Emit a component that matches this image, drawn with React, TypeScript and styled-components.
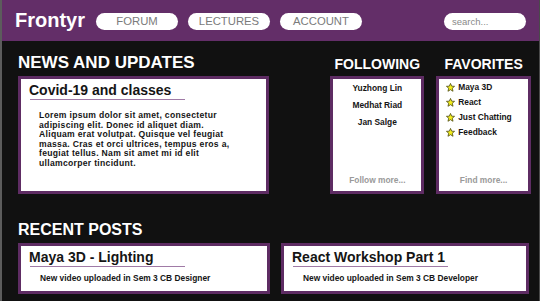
import React from "react";
import styled, { createGlobalStyle } from "styled-components";

const Global = createGlobalStyle`
  html, body { margin: 0; padding: 0; background: #111; }
  * { box-sizing: border-box; }
`;

const Page = styled.div`
  width: 540px;
  height: 301px;
  background: #111111;
  border-left: 2px solid #5c5c5c;
  border-right: 1px solid #4a4a4a;
  font-family: "Liberation Sans", Arial, sans-serif;
  overflow: hidden;
`;

const Header = styled.header`
  height: 41px;
  background: #632e68;
  display: flex;
  align-items: center;
  padding: 0 13px 0 13px;
`;

const Logo = styled.div`
  color: #fff;
  font-size: 20px;
  font-weight: 700;
  margin-right: 11px;
  margin-top: -1px;
`;

const Nav = styled.nav`
  display: flex;
  gap: 10px;
`;

const Pill = styled.div`
  width: 82px;
  height: 17px;
  border-radius: 9px;
  background: #fff;
  color: #7b7b7b;
  font-size: 11.3px;
  display: flex;
  align-items: center;
  justify-content: center;
  margin-top: 1px;
`;

const Search = styled(Pill)`
  margin-left: auto;
  justify-content: flex-start;
  padding-left: 8px;
  font-size: 9.5px;
  color: #8a8a8a;
`;

const Main = styled.main`
  padding: 0 8px 0 16px;
`;

const TopRow = styled.div`
  display: flex;
`;

const Column = styled.section<{ $w: number; $ml?: number }>`
  width: ${(p) => p.$w}px;
  margin-left: ${(p) => p.$ml ?? 0}px;
  display: flex;
  flex-direction: column;
`;

const HeadArea = styled.div<{ $center?: boolean; $h?: number }>`
  height: ${(p) => (p.$h ? `${p.$h}px` : "auto")};
  display: flex;
  align-items: flex-end;
  justify-content: ${(p) => (p.$center ? "center" : "flex-start")};
  padding-bottom: 5px;
`;

const Heading = styled.h2<{ $size: number }>`
  margin: 0;
  color: #fff;
  font-size: ${(p) => p.$size}px;
  line-height: 1;
  font-weight: 700;
`;

const Card = styled.div<{ $h: number }>`
  height: ${(p) => p.$h}px;
  background: #fff;
  border: 3px solid #5e2c63;
  display: flex;
  flex-direction: column;
`;

const CardTitle = styled.h3`
  margin: 0;
  padding: 4px 0 0 8px;
  font-size: 14px;
  line-height: 1;
  font-weight: 700;
  color: #151515;
`;

const Rule = styled.div`
  width: 155px;
  height: 1px;
  background: #a07aa6;
  margin: 2px 0 0 9px;
`;

const Body = styled.p`
  margin: 11px 0 0 18px;
  font-size: 8.6px;
  line-height: 9.5px;
  letter-spacing: 0.3px;
  font-weight: 700;
  color: #151515;
  white-space: nowrap;
`;

const List = styled.ul<{ $lh: number }>`
  list-style: none;
  margin: 0;
  padding: 1px 0 0 0;
  font-size: 8.4px;
  font-weight: 700;
  line-height: ${(p) => p.$lh}px;
  color: #151515;
`;

const Name = styled.li`
  text-align: center;
`;

const Fav = styled.li`
  display: flex;
  align-items: center;
  gap: 3px;
  padding-left: 7px;
`;

const More = styled.div`
  margin-top: auto;
  padding-bottom: 2px;
  text-align: center;
  font-size: 8.4px;
  line-height: 17px;
  font-weight: 700;
  color: #9a9a9a;
`;

const Recent = styled.div`
  margin-top: 28px;
`;

const PostRow = styled.div`
  display: flex;
  gap: 11px;
`;

const Post = styled(Card)<{ $w: number }>`
  width: ${(p) => p.$w}px;
`;

const PostNote = styled.div`
  margin: 7px 0 0 19px;
  font-size: 8.4px;
  line-height: 9px;
  font-weight: 700;
  color: #151515;
`;

const Star = () => (
  <svg width="9" height="9" viewBox="0 0 20 20">
    <polygon
      points="10,1 12.6,7 19,7.4 14,11.6 15.6,18.4 10,14.8 4.4,18.4 6,11.6 1,7.4 7.4,7"
      fill="#f4ef1c"
      stroke="#4d4a10"
      strokeWidth="1.8"
      strokeLinejoin="round"
    />
  </svg>
);

const following = ["Yuzhong Lin", "Medhat Riad", "Jan Salge"];
const favorites = ["Maya 3D", "React", "Just Chatting", "Feedback"];

const lorem = [
  "Lorem ipsum dolor sit amet, consectetur",
  "adipiscing elit. Donec id aliquet diam.",
  "Aliquam erat volutpat. Quisque vel feugiat",
  "massa. Cras et orci ultrices, tempus eros a,",
  "feugiat tellus. Nam sit amet mi id elit",
  "ullamcorper tincidunt.",
];

const posts = [
  { title: "Maya 3D - Lighting", note: "New video uploaded in Sem 3 CB Designer", w: 252 },
  { title: "React Workshop Part 1", note: "New video uploaded in Sem 3 CB Developer", w: 248 },
];

export default function App() {
  return (
    <>
      <Global />
      <Page>
        <Header>
          <Logo>Frontyr</Logo>
          <Nav>
            <Pill>FORUM</Pill>
            <Pill>LECTURES</Pill>
            <Pill>ACCOUNT</Pill>
          </Nav>
          <Search>search...</Search>
        </Header>
        <Main>
          <TopRow>
            <Column $w={252}>
              <HeadArea $h={35}>
                <Heading $size={17}>NEWS AND UPDATES</Heading>
              </HeadArea>
              <Card $h={118}>
                <CardTitle>Covid-19 and classes</CardTitle>
                <Rule />
                <Body>
                  {lorem.map((line, i) => (
                    <React.Fragment key={i}>
                      {line}
                      {i < lorem.length - 1 && <br />}
                    </React.Fragment>
                  ))}
                </Body>
              </Card>
            </Column>
            <Column $w={94} $ml={61}>
              <HeadArea $h={35} $center>
                <Heading $size={14}>FOLLOWING</Heading>
              </HeadArea>
              <Card $h={118}>
                <List $lh={17}>
                  {following.map((n) => (
                    <Name key={n}>{n}</Name>
                  ))}
                </List>
                <More>Follow more...</More>
              </Card>
            </Column>
            <Column $w={95} $ml={12}>
              <HeadArea $h={35} $center>
                <Heading $size={14}>FAVORITES</Heading>
              </HeadArea>
              <Card $h={118}>
                <List $lh={15}>
                  {favorites.map((f) => (
                    <Fav key={f}>
                      <Star />
                      {f}
                    </Fav>
                  ))}
                </List>
                <More>Find more...</More>
              </Card>
            </Column>
          </TopRow>
          <Recent>
            <HeadArea>
              <Heading $size={16}>RECENT POSTS</Heading>
            </HeadArea>
            <PostRow>
              {posts.map((p) => (
                <Post key={p.title} $w={p.w} $h={51}>
                  <CardTitle>{p.title}</CardTitle>
                  <Rule />
                  <PostNote>{p.note}</PostNote>
                </Post>
              ))}
            </PostRow>
          </Recent>
        </Main>
      </Page>
    </>
  );
}
